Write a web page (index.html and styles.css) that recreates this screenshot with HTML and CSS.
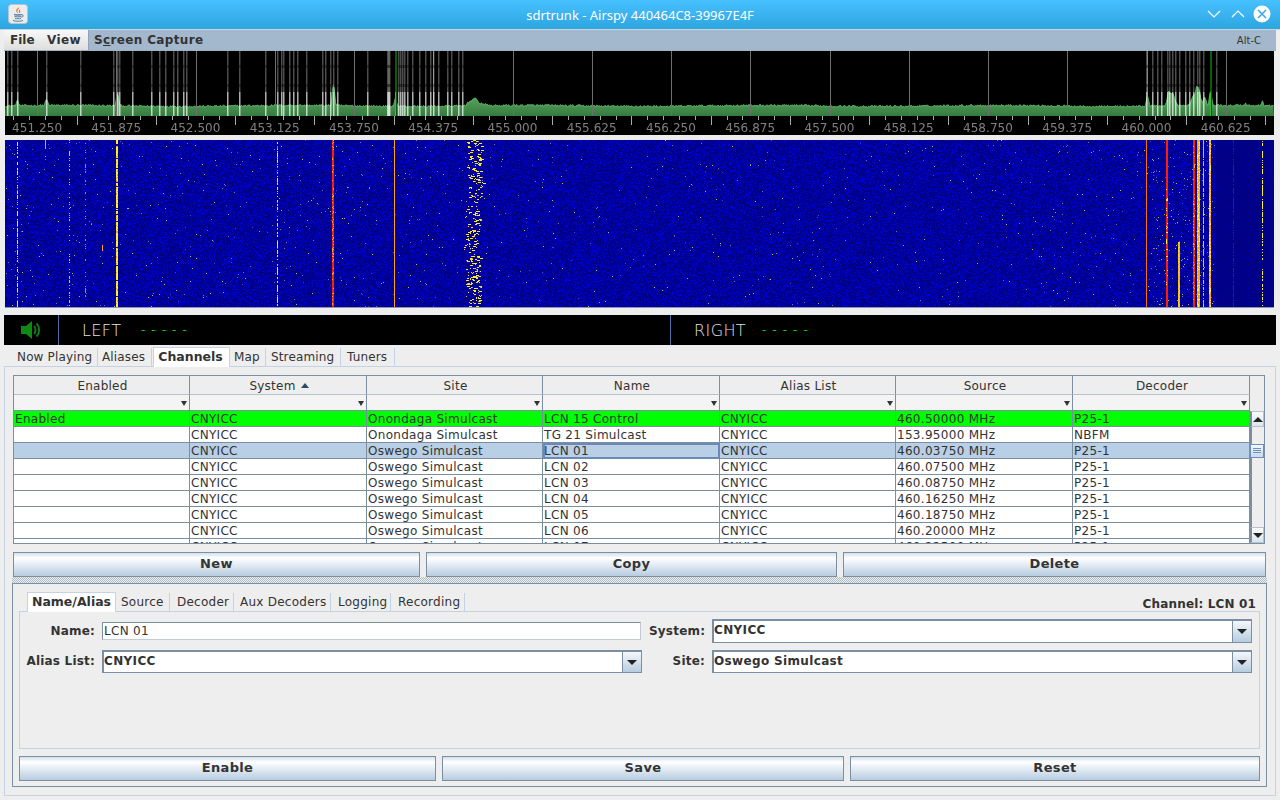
FILE: index.html
```html
<!DOCTYPE html>
<html lang="en">
<head>
<meta charset="utf-8">
<title>sdrtrunk - Airspy 440464C8-39967E4F</title>
<link rel="stylesheet" href="styles.css">
</head>
<body>
<div class="window">
  <header class="titlebar">
    <svg class="app-icon" width="20" height="20" viewBox="0 0 20 20">
      <rect x="0.5" y="0.5" width="19" height="19" rx="3" fill="#ececec" stroke="#b5c4cf"/>
      <path d="M10.5 3c1.5 2-2 3-1 5 .3.6.8 1 1 1.5-1.800-1-3-2.500-2-4C9.300 4.500 10.500 4 10.500 3zM12.500 5c-1.500 1-2 1.500-1.500 3 .2.500.3 1 0 1.500 1.500-1 1.500-2 1-3-.2-.6 0-1 .5-1.500z" fill="#e8761c"/>
      <path d="M6 10.500c2 .6 6 .6 8 0-.5.5-7.500.8-8 0zM6.500 12.500c1.500.4 5.500.4 7 0M7 14.500c1.500.3 4.500.3 6 0M5 16.500c2 1 8 1 10 0M14 11c1.500-.5 2 1.500-.5 2.500" fill="none" stroke="#4f7fa3" stroke-width="1"/>
    </svg>
    <span class="title">sdrtrunk - Airspy 440464C8-39967E4F</span>
    <svg class="win-btns" width="66" height="20" viewBox="0 0 66 20">
      <path d="M3 7l6 6 6-6M27 13l6-6 6 6" fill="none" stroke="#fff" stroke-width="1.200"/>
      <circle cx="57" cy="10" r="8.500" fill="#fff"/>
      <path d="M53 6l8 8M61 6l-8 8" stroke="#35aae4" stroke-width="1.500"/>
    </svg>
  </header>

  <div class="frame">
    <nav class="menubar">
      <span class="menu menu-file">File</span>
      <span class="menu menu-view">View</span>
      <div class="menu-active">
        <span class="menu-label">S<u>c</u>reen Capture</span>
        <span class="menu-accel">Alt-C</span>
      </div>
    </nav>

    <section class="display">
      <div class="spectrum">
        <canvas id="spectrum" width="1269" height="84"></canvas>
        <div class="freqs">
          <span class="freq freq-first">451.250</span>
          <span class="freq">451.875</span><span class="freq">452.500</span><span class="freq">453.125</span>
          <span class="freq">453.750</span><span class="freq">454.375</span><span class="freq">455.000</span>
          <span class="freq">455.625</span><span class="freq">456.250</span><span class="freq">456.875</span>
          <span class="freq">457.500</span><span class="freq">458.125</span><span class="freq">458.750</span>
          <span class="freq">459.375</span><span class="freq">460.000</span><span class="freq">460.625</span>
        </div>
      </div>
      <div class="display-gap"></div>
      <canvas id="waterfall" width="1269" height="168"></canvas>
    </section>

    <section class="audio">
      <div class="audio-mute">
        <svg width="22" height="20" viewBox="0 0 22 20">
          <path d="M1 6h5l6-5v18l-6-5H1z" fill="#0e8a12"/>
          <path d="M14 6c2 2 2 6 0 8M16.500 3.500c3.500 3.500 3.500 9.500 0 13" fill="none" stroke="#0e7a10" stroke-width="2"/>
        </svg>
      </div>
      <div class="audio-side audio-left"><span class="audio-name">LEFT</span><span class="audio-dash">- - - - -</span></div>
      <div class="audio-side audio-right"><span class="audio-name">RIGHT</span><span class="audio-dash">- - - - -</span></div>
    </section>

    <div class="tabs main-tabs">
      <span class="tab t-now">Now Playing</span>
      <span class="tab t-ali">Aliases</span>
      <span class="tab active t-cha">Channels</span>
      <span class="tab t-map">Map</span>
      <span class="tab t-str">Streaming</span>
      <span class="tab t-tun">Tuners</span>
    </div>

    <main class="panel">
      <div class="table-wrap">
        <div class="table">
          <div class="row head">
            <div class="cell">Enabled</div>
            <div class="cell">System<i class="sort-up"></i></div>
            <div class="cell">Site</div>
            <div class="cell">Name</div>
            <div class="cell">Alias List</div>
            <div class="cell">Source</div>
            <div class="cell">Decoder</div>
          </div>
          <div class="row filter">
            <div class="cell"><i class="down"></i></div><div class="cell"><i class="down"></i></div>
            <div class="cell"><i class="down"></i></div><div class="cell"><i class="down"></i></div>
            <div class="cell"><i class="down"></i></div><div class="cell"><i class="down"></i></div>
            <div class="cell"><i class="down"></i></div>
          </div>
          <div class="row on">
            <div class="cell">Enabled</div><div class="cell">CNYICC</div><div class="cell">Onondaga Simulcast</div><div class="cell">LCN 15 Control</div><div class="cell">CNYICC</div><div class="cell">460.50000 MHz</div><div class="cell">P25-1</div>
          </div>
          <div class="row">
            <div class="cell"></div><div class="cell">CNYICC</div><div class="cell">Onondaga Simulcast</div><div class="cell">TG 21 Simulcast</div><div class="cell">CNYICC</div><div class="cell">153.95000 MHz</div><div class="cell">NBFM</div>
          </div>
          <div class="row sel">
            <div class="cell"></div><div class="cell">CNYICC</div><div class="cell">Oswego Simulcast</div><div class="cell focus">LCN 01</div><div class="cell">CNYICC</div><div class="cell">460.03750 MHz</div><div class="cell">P25-1</div>
          </div>
          <div class="row">
            <div class="cell"></div><div class="cell">CNYICC</div><div class="cell">Oswego Simulcast</div><div class="cell">LCN 02</div><div class="cell">CNYICC</div><div class="cell">460.07500 MHz</div><div class="cell">P25-1</div>
          </div>
          <div class="row">
            <div class="cell"></div><div class="cell">CNYICC</div><div class="cell">Oswego Simulcast</div><div class="cell">LCN 03</div><div class="cell">CNYICC</div><div class="cell">460.08750 MHz</div><div class="cell">P25-1</div>
          </div>
          <div class="row">
            <div class="cell"></div><div class="cell">CNYICC</div><div class="cell">Oswego Simulcast</div><div class="cell">LCN 04</div><div class="cell">CNYICC</div><div class="cell">460.16250 MHz</div><div class="cell">P25-1</div>
          </div>
          <div class="row">
            <div class="cell"></div><div class="cell">CNYICC</div><div class="cell">Oswego Simulcast</div><div class="cell">LCN 05</div><div class="cell">CNYICC</div><div class="cell">460.18750 MHz</div><div class="cell">P25-1</div>
          </div>
          <div class="row">
            <div class="cell"></div><div class="cell">CNYICC</div><div class="cell">Oswego Simulcast</div><div class="cell">LCN 06</div><div class="cell">CNYICC</div><div class="cell">460.20000 MHz</div><div class="cell">P25-1</div>
          </div>
          <div class="row">
            <div class="cell"></div><div class="cell">CNYICC</div><div class="cell">Oswego Simulcast</div><div class="cell">LCN 07</div><div class="cell">CNYICC</div><div class="cell">460.22500 MHz</div><div class="cell">P25-1</div>
          </div>
        </div>
        <div class="scroll">
          <div class="scroll-head"></div>
          <div class="scroll-btn"><i class="arrow-up"></i></div>
          <div class="scroll-track"><div class="thumb"><b></b><b></b><b></b></div></div>
          <div class="scroll-btn"><i class="arrow-down"></i></div>
        </div>
      </div>

      <div class="buttons buttons-top">
        <button class="btn">New</button>
        <button class="btn">Copy</button>
        <button class="btn">Delete</button>
      </div>

      <div class="splitter"></div>

      <section class="editor">
        <div class="tabs editor-tabs">
          <span class="tab active e-nam">Name/Alias</span>
          <span class="tab e-sou">Source</span>
          <span class="tab e-dec">Decoder</span>
          <span class="tab e-aux">Aux Decoders</span>
          <span class="tab e-log">Logging</span>
          <span class="tab e-rec">Recording</span>
          <span class="channel-label">Channel: LCN 01</span>
        </div>
        <div class="pane">
          <div class="form">
            <label class="lbl">Name:</label>
            <input class="text-input" value="LCN 01">
            <label class="lbl">System:</label>
            <div class="combo"><span class="combo-val">CNYICC</span><span class="combo-btn"><i class="arrow-down"></i></span></div>
            <label class="lbl">Alias List:</label>
            <div class="combo"><span class="combo-val">CNYICC</span><span class="combo-btn"><i class="arrow-down"></i></span></div>
            <label class="lbl">Site:</label>
            <div class="combo"><span class="combo-val">Oswego Simulcast</span><span class="combo-btn"><i class="arrow-down"></i></span></div>
          </div>
        </div>
        <div class="buttons buttons-bottom">
          <button class="btn">Enable</button>
          <button class="btn">Save</button>
          <button class="btn">Reset</button>
        </div>
      </section>
    </main>
  </div>
</div>
<script src="app.js"></script>
</body>
</html>
```

FILE: styles.css
```css
* { box-sizing: border-box; }
html, body { margin: 0; padding: 0; }
body {
  width: 1280px;
  height: 800px;
  overflow: hidden;
  background: #eeeeee;
  color: #333;
  font-family: "DejaVu Sans", sans-serif;
  font-size: 12px;
}
.window { width: 1280px; height: 800px; display: flex; flex-direction: column; }

.titlebar {
  height: 29px;
  flex: none;
  display: flex;
  align-items: center;
  position: relative;
  background: linear-gradient(#47c1ff, #2da5df);
}
.app-icon { margin-left: 8px; margin-top: -2px; }
.title {
  position: absolute;
  left: 0;
  right: 0;
  text-align: center;
  color: #fff;
  font-family: "Noto Sans", sans-serif;
  font-size: 13px;
}
.win-btns { margin-left: auto; margin-right: 9px; margin-top: -1px; }

.frame {
  flex: 1;
  display: flex;
  flex-direction: column;
  padding: 1px 4px 0;
  border-top: 1px solid #c8d4de;
}
.menubar {
  height: 21px;
  flex: none;
  display: flex;
  margin-top: -1px;
  font-weight: bold;
  font-size: 12px;
  letter-spacing: 0.35px;
  background: linear-gradient(#f8f8f8, #dedede);
  border-bottom: 1px solid #9fb0c0;
}
.menu { line-height: 20px; flex: none; }
.menu-file { margin-left: 6px; width: 37px; letter-spacing: 0; }
.menu-view { width: 41px; }
.menu-active {
  flex: 1;
  display: flex;
  justify-content: space-between;
  align-items: center;
  background: #a3b8cc;
  border-left: 1px solid #8ea2b6;
  padding: 0 15px 0 5px;
}
.menu-accel { font-weight: normal; font-size: 10px; letter-spacing: 0; }

.display { flex: none; margin-left: 1px; width: 1269px; }
.spectrum { position: relative; height: 84px; }
#spectrum, #waterfall { display: block; }
.freqs {
  position: absolute;
  left: 0;
  top: 69px;
  display: flex;
  color: #808080;
  font-size: 12px;
  line-height: 16px;
  letter-spacing: 0.05px;
}
.freq { width: 79.250px; flex: none; text-align: center; }
.freq-first { width: 71.600px; text-align: right; padding-right: 14.500px; }
.display-gap { height: 5px; background: #ececec; }

.audio {
  flex: none;
  height: 30px;
  margin-top: 7px;
  background: #000;
  display: flex;
}
.audio-mute {
  width: 54px;
  display: flex;
  align-items: center;
  padding-left: 16px;
  flex: none;
}
.audio-side {
  border-left: 1px solid #4f6ea8;
  display: flex;
  align-items: center;
  padding-left: 23px;
  flex: 1;
}
.audio-left { flex: none; width: 612px; }
.audio-name { font-size: 16px; font-weight: 200; width: 59px; letter-spacing: 0.4px; color: #e0e0e0; }
.audio-right .audio-name { width: 68px; }
.audio-dash { color: #11cc11; font-size: 12px; letter-spacing: 1.100px; }

.tabs { display: flex; }
.main-tabs { height: 20px; margin-top: 2px; flex: none; position: relative; z-index: 1; }
.tab {
  line-height: 18px;
  height: 19px;
  padding: 0;
  border-right: 1px solid #c3d3e3;
  margin-top: 1px;
  white-space: nowrap;
  font-size: 12px;
  letter-spacing: 0.15px;
}
.editor-tabs .tab { letter-spacing: 0.25px; }
.tab.active {
  background: #fff;
  font-weight: bold;
  font-size: 12.500px;
  letter-spacing: 0;
  border: 1px solid #c3d3e3;
  border-bottom: 0;
  height: 20px;
  margin-top: 0;
  text-align: center;
}
.editor-tabs .tab.active { letter-spacing: 0; }
.t-now { width: 94px; padding-left: 13px; }
.t-ali { width: 54px; padding-left: 4px; }
.t-cha { width: 77px; margin-left: 1px; padding-right: 2px; }
.t-map { width: 36px; padding-left: 4px; }
.t-str { width: 75px; padding-left: 5px; }
.t-tun { width: 54px; padding-left: 6px; }

.panel {
  flex: none;
  height: 430px;
  margin-top: -1px;
  width: 1272px;
  border: 1px solid #c3d3e3;
  padding: 8px 0 0 8px;
}
.table-wrap {
  height: 169px;
  width: 1252px;
  display: flex;
  border: 1px solid #7c8ea2;
  background: #eee;
  overflow: hidden;
}
.table { width: 1236px; flex: none; }
.row {
  display: grid;
  grid-template-columns: 176px 177px 176px 177px 176px 177px 177px;
  height: 16px;
  background: #fff;
  line-height: 14px;
  font-size: 12px;
  letter-spacing: 0.3px;
}
.cell {
  border-right: 1px solid #7c8ea2;
  border-bottom: 1px solid #7c8ea2;
  padding: 1px 0 0 1px;
  white-space: nowrap;
  overflow: hidden;
  position: relative;
}
.head { height: 19px; background: #eee; line-height: 18px; letter-spacing: 0.25px; }
.head .cell { text-align: center; border-bottom-color: #b6c2ce; padding-left: 2px; }
.filter { height: 16px; background: #f4f4f4; }
.on { background: #00ff00; }
.sel { background: #b8cfe5; }
.focus { outline: 2px solid #6c88b4; outline-offset: -2px; }
.sort-up, .down, .arrow-up, .arrow-down {
  display: inline-block;
  width: 0;
  height: 0;
  border-style: solid;
  border-color: transparent;
}
.sort-up { border-width: 0 4.500px 5px; border-bottom-color: #2d4a66; margin: 0 0 2px 5px; }
.down { border-width: 5px 3.500px 0; border-top-color: #333; position: absolute; right: 2px; top: 6px; }
.arrow-up { border-width: 0 5px 5px; border-bottom-color: #222; }
.arrow-down { border-width: 5px 5px 0; border-top-color: #222; }

.scroll { width: 14px; flex: none; display: flex; flex-direction: column; }
.scroll-head { height: 35px; flex: none; }
.scroll-btn {
  height: 16px;
  flex: none;
  display: flex;
  align-items: center;
  justify-content: center;
  background: linear-gradient(#fbfcfd, #dbe5ee);
  border: 1px solid #b6c2ce;
  border-left: 2px solid #7c8ea2;
}
.scroll-track {
  flex: 1;
  border-left: 2px solid #7c8ea2;
  padding-top: 17px;
  background: #eee;
}
.thumb {
  height: 14px;
  margin-left: -2px;
  border: 1px solid #6c8ec4;
  background: linear-gradient(#f4f8fb, #c8d9e9);
  display: flex;
  flex-direction: column;
  gap: 1px;
  padding: 3px 2px 0;
}
.thumb b { height: 1px; background: #6f8fbe; display: block; }

.buttons { display: grid; gap: 6px; }
.buttons-top { margin-top: 8px; grid-template-columns: 407px 411px 423px; }
.buttons-bottom { margin-top: 7px; grid-template-columns: 417px 402px 410px; }
.btn {
  height: 25px;
  padding: 0 0 2px;
  border: 1px solid #7c8ea2;
  border-radius: 0;
  background: linear-gradient(#d3e0ec, #fff 22%, #eef3f8 40%, #b7cce0);
  font-family: "DejaVu Sans", sans-serif;
  font-weight: bold;
  font-size: 13px;
  letter-spacing: 0.35px;
  color: #333;
}

.splitter {
  height: 6px;
  margin-left: -1px;
  width: 1255px;
  background: repeating-conic-gradient(#b0bcc8 0 25%, #eeeeee 0 50%) 0 0 / 2px 2px;
}
.editor {
  width: 1255px;
  height: 204px;
  margin-left: -1px;
  border: 1px solid #7c8ea2;
  padding: 8px 6px 0;
}
.editor-tabs { height: 20px; padding-left: 8px; position: relative; z-index: 1; }
.e-nam { width: 89px; }
.e-sou { width: 54px; padding-left: 5px; }
.e-dec { width: 64px; padding-left: 7px; }
.e-aux { width: 97px; padding-left: 6px; }
.e-log { width: 60px; padding-left: 7px; }
.e-rec { width: 74px; padding-left: 7px; }
.channel-label {
  margin-left: auto;
  margin-right: 4px;
  margin-top: 3px;
  font-weight: bold;
  font-size: 12px;
  letter-spacing: 0.15px;
  line-height: 19px;
}
.pane {
  height: 138px;
  width: 1241px;
  margin-top: -1px;
  border: 1px solid #c3d3e3;
  padding: 7px 0 0 0;
}
.form {
  display: grid;
  grid-template-columns: 75px 540px 56px 540px;
  grid-template-rows: 24px 23px;
  row-gap: 7px;
  column-gap: 7px;
  align-items: center;
}
.lbl { text-align: right; font-weight: bold; font-size: 12px; letter-spacing: 0.2px; white-space: nowrap; margin-top: -1px; }
.text-input {
  height: 18px;
  width: 539px;
  border: 1px solid #c3ccd5;
  border-top-color: #7c8ea2;
  border-left-color: #7c8ea2;
  padding: 0 0 0 1px;
  background: #fff;
  font-family: "DejaVu Sans", sans-serif;
  font-size: 12px;
  letter-spacing: 0.3px;
  color: #333;
  outline: 0;
}
.combo {
  height: 100%;
  display: flex;
  border: 1px solid #7c8ea2;
  border-left-width: 2px;
  border-top-width: 2px;
  background: #fff;
}
.combo-val { flex: 1; font-weight: bold; font-size: 12px; letter-spacing: 0.35px; line-height: 19px; padding-left: 0; }
.combo-btn {
  width: 19px;
  display: flex;
  align-items: center;
  justify-content: center;
  border-left: 1px solid #7c8ea2;
  background: linear-gradient(#f4f8fb, #b7cce0);
}
```

FILE: app.js
```js
(function () {
  var seed = 12345;
  function rnd() {
    seed = (seed * 1664525 + 1013904223) >>> 0;
    return seed / 4294967296;
  }

  /* ---------- spectrum ---------- */
  var sc = document.getElementById('spectrum').getContext('2d');
  var OX = 5;              /* canvas left in page px */
  var OY = 51;             /* canvas top in page px */
  sc.fillStyle = '#000';
  sc.fillRect(0, 0, 1269, 84);

  var BASE = 116 - OY;
  var bumps = [
    [46, 1.5, 6], [17, 1.5, 5], [117, 1.5, 12], [333, 1.5, 22],
    [395, 1.5, 8], [474, 5, 7], [468, 3, 2], [483, 4, 1.5], [1147, 1.5, 10], [1168, 2, 12],
    [1172, 3, 12], [1192, 2, 8], [1197, 3, 20], [1204, 2, 8], [1210, 1.5, 14], [1262, 1, 5], [1245, 1, 2]
  ];
  var tops = [];
  for (var x = 0; x < 1269; x++) {
    var h = 9.5 + rnd() * 2 + Math.sin(x / 37) * 0.5;
    var px = x + OX;
    for (var b = 0; b < bumps.length; b++) {
      var d = (px - bumps[b][0]) / bumps[b][1];
      h += bumps[b][2] * Math.exp(-d * d);
    }
    tops.push(h);
  }
  sc.beginPath();
  sc.moveTo(0, BASE);
  for (var i = 0; i < 1269; i++) sc.lineTo(i + 0.5, BASE - tops[i]);
  sc.lineTo(1269, BASE);
  sc.closePath();
  var g = sc.createLinearGradient(0, BASE - 14, 0, BASE);
  g.addColorStop(0, '#4f9a57');
  g.addColorStop(1, '#357a3e');
  sc.fillStyle = g;
  sc.fill();
  sc.beginPath();
  for (var j = 0; j < 1269; j++) sc.lineTo(j + 0.5, BASE - tops[j] + 0.5);
  sc.strokeStyle = '#5fae66';
  sc.lineWidth = 1;
  sc.stroke();

  /* frequency grid lines */
  sc.fillStyle = '#6f6f6f';
  for (var k = 0; k < 16; k++) {
    sc.fillRect(Math.round(37 + k * 79.25) - OX, 0, 1, BASE);
  }
  /* channel markers */
  var chans = [7, 11, 17, 46, 80, 113, 117, 119, 132, 151, 159, 165, 173, 177, 183, 186, 227, 239, 265, 277, 281, 283,
    289, 293, 297, 306, 322, 325, 330, 333, 337, 367, 388, 387, 389, 398, 400, 402, 404, 407, 412, 419, 425, 430, 433,
    438, 447, 451, 458, 462, 1146, 1152, 1157, 1161, 1167, 1169, 1172, 1175, 1179, 1185, 1189, 1193, 1197, 1199, 1203, 1216];
  chans.forEach(function (c) {
    var cx = c - OX;
    sc.fillStyle = 'rgba(255,255,255,0.3)';
    sc.fillRect(cx, 0, 1, BASE - 24);
    sc.fillStyle = 'rgba(255,255,255,0.14)';
    sc.fillRect(cx + 1, 0, 1, BASE - 24);
    sc.fillStyle = 'rgba(255,255,255,0.68)';
    sc.fillRect(cx, BASE - 24, 1, 24);
    sc.fillStyle = 'rgba(255,255,255,0.35)';
    sc.fillRect(cx + 1, BASE - 24, 1, 24);
    sc.fillStyle = 'rgba(0,0,0,0.35)';
    for (var y = 14; y < BASE - 24; y += 19) sc.fillRect(cx, y, 2, 3);
  });
  [395, 1210].forEach(function (c) {
    sc.fillStyle = '#0a5c0a';
    sc.fillRect(c - OX, 0, 2, BASE);
    sc.fillStyle = '#33c033';
    sc.fillRect(c - OX, BASE - 24, 1, 24);
  });

  /* scale ticks */
  sc.fillStyle = '#aaa';
  for (var t = 13.3 - 15.85; t < 1280; t += 15.85) {
    var m = Math.round((t - 76.7) / 15.85);
    var major = ((m % 5) + 5) % 5 === 0;
    sc.fillRect(Math.round(t) - OX, BASE, 1, major ? 9 : 4);
  }

  /* ---------- waterfall ---------- */
  var wc = document.getElementById('waterfall').getContext('2d');
  var W = 1269, H = 168;
  var im = wc.createImageData(W, H);
  var data = im.data;
  function put(x, y, r, gg, bb) {
    if (x < 0 || x >= W || y < 0 || y >= H) return;
    var o = (y * W + x) * 4;
    data[o] = r; data[o + 1] = gg; data[o + 2] = bb; data[o + 3] = 255;
  }
  function density(p) {
    if (p < 480) return 0.006;
    if (p < 1000) return 0.0035;
    if (p < 1146) return 0.006;
    if (p < 1215) return 0.022;
    return 0;
  }
  for (var y2 = 0; y2 < H; y2++) {
    for (var xx = 0; xx < W; xx++) {
      var p = xx + OX;
      if (p >= 1215) {
        put(xx, y2, 0, 0, 125 + rnd() * 20 + (rnd() < 0.015 ? 35 : 0));
        continue;
      }
      var v = rnd();
      var blue = 125 + v * v * 100 + (rnd() < 0.03 ? 25 : 0);
      put(xx, y2, 0, 0, Math.min(230, blue));
      if (rnd() < density(p)) {
        var s = rnd();
        if (s < 0.35) put(xx, y2, 190, 190, 40);
        else if (s < 0.75) put(xx, y2, 120, 120, 130);
        else put(xx, y2, 70, 70, 190);
      }
    }
  }
  function line(px, w, col, from, to, alt, chance, gap) {
    for (var y = from; y < to; y++) {
      if (gap && rnd() > gap) continue;
      for (var i = 0; i < w; i++) {
        var c = alt && rnd() < chance ? alt : col;
        put(px - OX + i, y, c[0], c[1], c[2]);
      }
    }
  }
  var YEL = [255, 240, 30], ORG = [255, 165, 0], RED = [255, 30, 0], AMB = [255, 205, 0];
  line(17, 1, YEL, 0, H, [120, 120, 100], 0.1, 0.65);
  line(45, 1, ORG, 0, 9);
  line(69, 1, [220, 210, 60], 0, H, null, 0, 0.35);
  line(85, 1, [150, 150, 110], 0, H, null, 0, 0.2);
  line(116, 2, YEL, 0, H, ORG, 0.15, 0.92);
  line(102, 1, ORG, 105, 111);
  line(277, 1, YEL, 0, H, [140, 140, 100], 0.2, 0.6);
  line(332, 2, RED, 0, H, ORG, 0.25);
  line(394, 1, ORG, 0, H);
  line(1146, 1, [255, 110, 0], 0, H);
  line(1166, 2, RED, 0, 48);
  line(1166, 2, RED, 48, 110, YEL, 0.2);
  line(1166, 2, RED, 110, H, YEL, 0.08);
  line(1178, 2, AMB, 102, H, ORG, 0.3);
  line(1193, 2, RED, 0, H, ORG, 0.12);
  line(1197, 3, ORG, 0, H, YEL, 0.35);
  line(1203, 1, AMB, 0, H, ORG, 0.2, 0.85);
  line(1209, 2, ORG, 0, H, YEL, 0.35);
  line(1262, 1, YEL, 0, H, null, 0, 0.55);
  line(1233, 1, [30, 30, 190], 0, H, null, 0, 0.6);

  /* wandering signal */
  for (var sy = 0; sy < H; sy++) {
    var cx = 473 + Math.sin(sy / 21) * 2 + Math.sin(sy / 6) * 1.5;
    var n = rnd() < 0.15 ? 0 : 1 + Math.floor(rnd() * 3);
    for (var q = 0; q < n; q++) {
      var off = Math.round((rnd() - 0.5) * 15);
      var len = 1 + Math.floor(rnd() * 3);
      for (var l = 0; l < len; l++) {
        var yel = rnd() < 0.95;
        put(Math.round(cx) + off + l - OX, sy, yel ? 255 : 150, yel ? 235 : 150, yel ? 20 : 130);
      }
    }
  }
  wc.putImageData(im, 0, 0);
  wc.fillStyle = '#8a98a6';
  wc.fillRect(0, 167, W, 1);
})();
```
